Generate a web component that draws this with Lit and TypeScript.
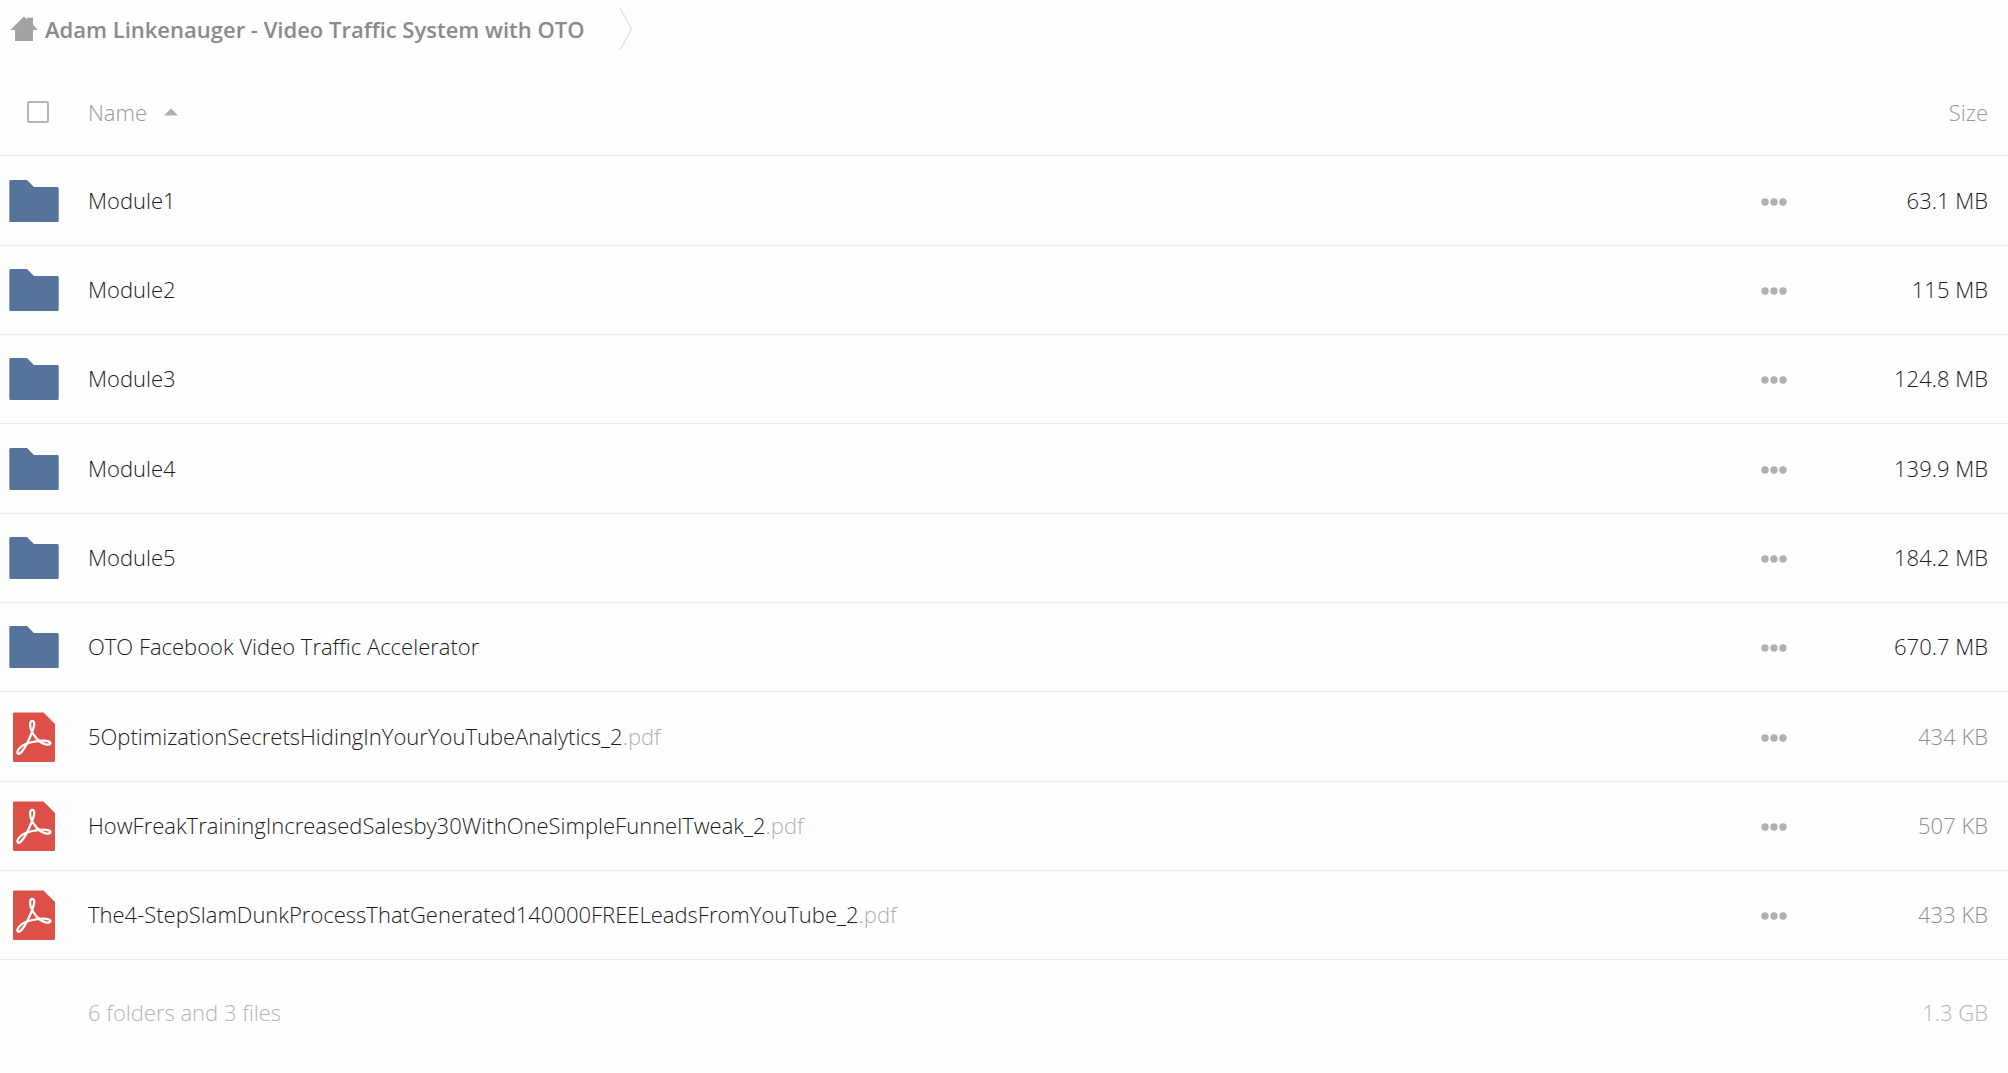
import { LitElement, html, css, svg } from "lit";
import { customElement, state } from "lit/decorators.js";

interface Entry {
  kind: "folder" | "pdf";
  name: string;
  ext?: string;
  size: string;
}

const ENTRIES: Entry[] = [
  { kind: "folder", name: "Module1", size: "63.1 MB" },
  { kind: "folder", name: "Module2", size: "115 MB" },
  { kind: "folder", name: "Module3", size: "124.8 MB" },
  { kind: "folder", name: "Module4", size: "139.9 MB" },
  { kind: "folder", name: "Module5", size: "184.2 MB" },
  { kind: "folder", name: "OTO Facebook Video Traffic Accelerator", size: "670.7 MB" },
  { kind: "pdf", name: "5OptimizationSecretsHidingInYourYouTubeAnalytics_2", ext: ".pdf", size: "434 KB" },
  { kind: "pdf", name: "HowFreakTrainingIncreasedSalesby30WithOneSimpleFunnelTweak_2", ext: ".pdf", size: "507 KB" },
  { kind: "pdf", name: "The4-StepSlamDunkProcessThatGenerated140000FREELeadsFromYouTube_2", ext: ".pdf", size: "433 KB" },
];

const folderIcon = html`<svg class="icon" width="50" height="50" viewBox="0 0 50 50" aria-hidden="true">
  <path fill="#56739b" d="M1.5 4H18L25 11H48.500Q49.700 11 49.700 12.500V44.500Q49.700 46 48.500 46H1.500Q.3 46 .3 44.500V5.500Q.3 4 1.500 4Z" />
</svg>`;

const pdfIcon = html`<svg class="icon" width="50" height="50" viewBox="0 0 50 50" aria-hidden="true">
  <path fill="#dd5048" d="M5 .5H34.500L46 12V48.500Q46 50 44.500 50H5.500Q4 50 4 48.500V2Q4 .5 5 .5Z" />
  <path fill="none" stroke="#fff" stroke-width="2.300" stroke-linecap="round" stroke-linejoin="round"
    d="M23.300 8.800C20.800 8.800 20.700 13 21.800 17C23.800 23.500 30.500 31 36.500 32.300C41.500 33.400 43 30.500 39.500 29.400C34.500 27.800 23.500 29.200 16.500 32C10.500 34.600 7.500 39.300 8.700 41.300C10.300 43.300 14.500 38.500 17.500 32.500C20.500 26.500 24 18.500 25 14C25.700 10.500 24.800 8.800 23.300 8.800Z" />
</svg>`;

const homeIcon = html`<svg class="home" width="28" height="26" viewBox="0 0 28 26" aria-hidden="true">
  <path fill="#a3a3a3" d="M14 .5L17.200 3.500V1.800H23V8.500L27.800 14H23V25H5V14H.2Z" />
</svg>`;

@customElement("app-root")
export class AppRoot extends LitElement {
  @state() private ascending = true;

  static styles = css`
    :host {
      display: block;
      color: #1c1c1c;
      background: #fefefe;
      min-height: 100vh;
      font: 300 22px/30px "Open Sans", "Noto Sans", sans-serif;
    }
    .crumbs {
      display: flex;
      align-items: center;
      gap: 34px;
      height: 58px;
      margin-bottom: 2px;
      padding-left: 10px;
    }
    .crumb {
      display: flex;
      align-items: center;
      gap: 7px;
      color: #8a8a8a;
      font-weight: 600;
      text-decoration: none;
    }
    .files {
      width: 100%;
      border-collapse: separate;
      border-spacing: 0;
      table-layout: fixed;
    }
    th,
    td {
      padding: 0;
      font-weight: 300;
      text-align: left;
      vertical-align: middle;
    }
    .head th,
    .row td {
      border-bottom: 1px solid #ececec;
    }
    .head th {
      height: 96px;
      box-sizing: border-box;
      padding-top: 8px;
      color: #999;
    }
    .row td {
      height: 89px;
      box-sizing: border-box;
    }
    .row:nth-child(3n + 1) td {
      height: 90px;
    }
    .row .label,
    .row .size {
      padding-bottom: 2px;
    }
    .row .actions {
      padding-top: 2px;
    }
    .col-icon {
      width: 88px;
    }
    .col-menu {
      width: 75px;
    }
    .col-size {
      width: 172px;
    }
    .head .pick {
      padding-left: 27px;
    }
    .box {
      display: block;
      appearance: none;
      width: 22px;
      height: 22px;
      margin: 0;
      border: 2px solid #b3b3b3;
      border-radius: 2px;
      background: #fff;
    }
    .box:checked {
      background: #b3b3b3;
    }
    button {
      padding: 0;
      border: 0;
      background: none;
      color: inherit;
      font: inherit;
      cursor: pointer;
    }
    .sort {
      display: flex;
      align-items: center;
      gap: 17px;
    }
    .arrow.down {
      transform: rotate(180deg);
    }
    .icon {
      display: block;
      margin-left: 9px;
    }
    .name {
      color: inherit;
      text-decoration: none;
    }
    .ext {
      color: #b0b0b0;
    }
    .more {
      display: block;
      padding: 8px 0;
    }
    .more svg {
      display: block;
    }
    .head .size,
    .row .size,
    .foot .size {
      padding-right: 20px;
      text-align: right;
    }
    .pdf .size {
      color: #8e8e8e;
    }
    .foot td {
      height: 104px;
      color: #b5b5b5;
    }
  `;

  private get entries() {
    return this.ascending ? ENTRIES : [...ENTRIES].reverse();
  }

  private row(e: Entry) {
    return html`<tr class="row ${e.kind}">
      <td>${e.kind === "folder" ? folderIcon : pdfIcon}</td>
      <td class="label"><a class="name" href="#">${e.name}<span class="ext">${e.ext ?? ""}</span></a></td>
      <td class="actions">
        <button class="more" type="button" aria-label="More actions">
          <svg width="26" height="10" viewBox="0 0 26 10" fill="#b0b0b0" aria-hidden="true">
            ${[4, 13, 22].map((x) => svg`<circle cx=${x} cy="5" r="3.700" />`)}
          </svg>
        </button>
      </td>
      <td class="size">${e.size}</td>
    </tr>`;
  }

  render() {
    return html`
      <nav class="crumbs">
        <a class="crumb" href="#">${homeIcon}<span>Adam Linkenauger - Video Traffic System with OTO</span></a>
        <svg width="14" height="44" viewBox="0 0 14 44" aria-hidden="true">
          <path d="M1 1L12.500 22L1 43" fill="none" stroke="#dedede" stroke-width="1.200" />
        </svg>
      </nav>
      <table class="files">
        <colgroup>
          <col class="col-icon" />
          <col />
          <col class="col-menu" />
          <col class="col-size" />
        </colgroup>
        <thead>
          <tr class="head">
            <th class="pick"><input class="box" type="checkbox" aria-label="Select all" /></th>
            <th>
              <button class="sort" type="button" @click=${() => (this.ascending = !this.ascending)}>
                Name
                <svg class="arrow ${this.ascending ? "" : "down"}" width="14" height="8" viewBox="0 0 14 8" aria-hidden="true">
                  <path d="M7 .5L14 7.500H0Z" fill="#b0b0b0" />
                </svg>
              </button>
            </th>
            <th></th>
            <th class="size">Size</th>
          </tr>
        </thead>
        <tbody>
          ${this.entries.map((e) => this.row(e))}
        </tbody>
        <tfoot>
          <tr class="foot">
            <td></td>
            <td>6 folders and 3 files</td>
            <td></td>
            <td class="size">1.3 GB</td>
          </tr>
        </tfoot>
      </table>
    `;
  }
}
